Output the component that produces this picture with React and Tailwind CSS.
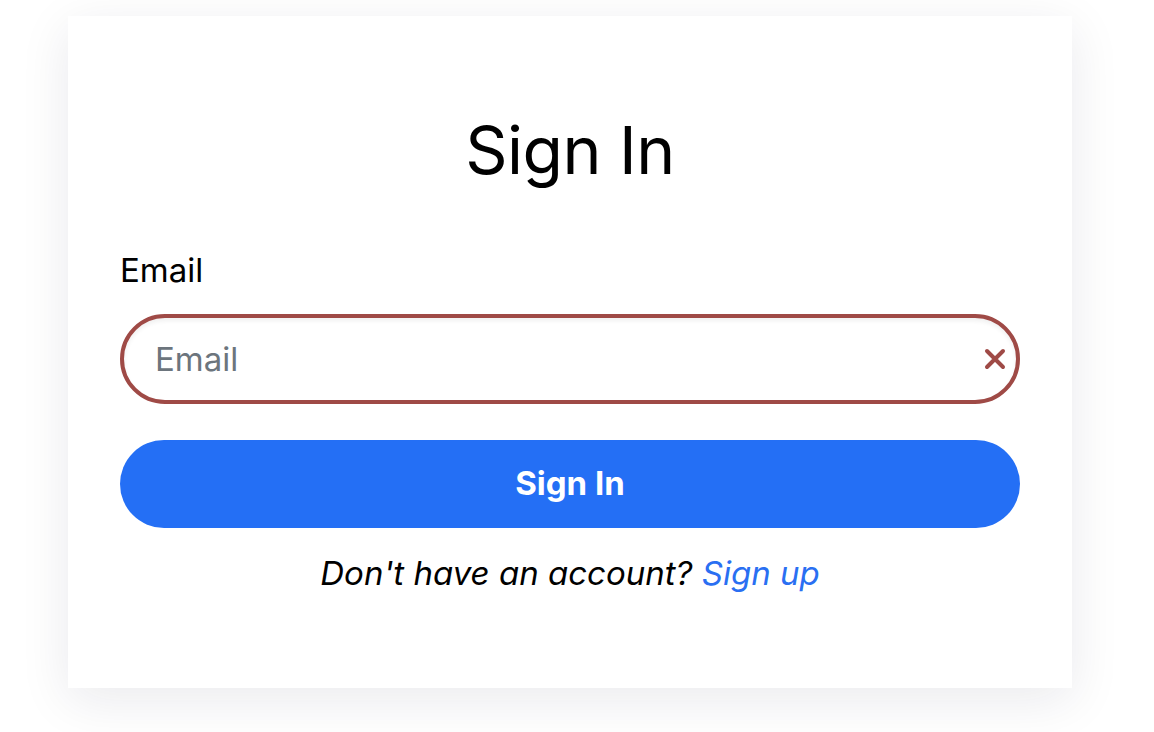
const App = () => {
  return (
    <div
      className="min-h-[732px] w-[1154px] bg-white pl-[68px] pt-4"
      style={{ fontFamily: "Inter, 'Noto Sans', sans-serif" }}
    >
      {/* Card */}
      <div className="w-[1004px] h-[672px] bg-white shadow-[0_12px_48px_rgba(20,20,60,0.09)] px-[52px] pt-[94px] flex flex-col">
        <h1 className="text-center text-[66px] leading-[80px] font-normal text-black tracking-[-0.5px]">
          Sign In
        </h1>

        {/* Email field */}
        <label className="mt-[60px] text-[33px] leading-[40px] text-black">Email</label>
        <div className="relative mt-[24px] h-[90px] rounded-full border-4 border-[#9f4a46] shadow-[inset_0_3px_4px_rgba(0,0,0,0.06)] flex items-center">
          <input
            type="email"
            placeholder="Email"
            className="w-full h-full bg-transparent pl-[31px] pr-16 text-[33px] text-black placeholder:text-[#6c757d] outline-none rounded-full"
          />
          <svg
            className="absolute right-[8px] top-1/2 -translate-y-1/2"
            width="26"
            height="26"
            viewBox="0 0 26 26"
            fill="none"
            stroke="#9f4a46"
            strokeWidth="4"
            strokeLinecap="round"
          >
            <path d="M5 5 L21 21 M21 5 L5 21" />
          </svg>
        </div>

        {/* Submit */}
        <button className="mt-[36px] h-[88px] rounded-full bg-[#246ff5] text-white text-[33px] font-bold">
          Sign In
        </button>

        <p className="mt-[25px] text-center italic text-[33px] leading-[40px] text-black">
          Don't have an account? <a href="#" className="text-[#2a6ff2]">Sign up</a>
        </p>
      </div>
    </div>
  );
};

export default App;
